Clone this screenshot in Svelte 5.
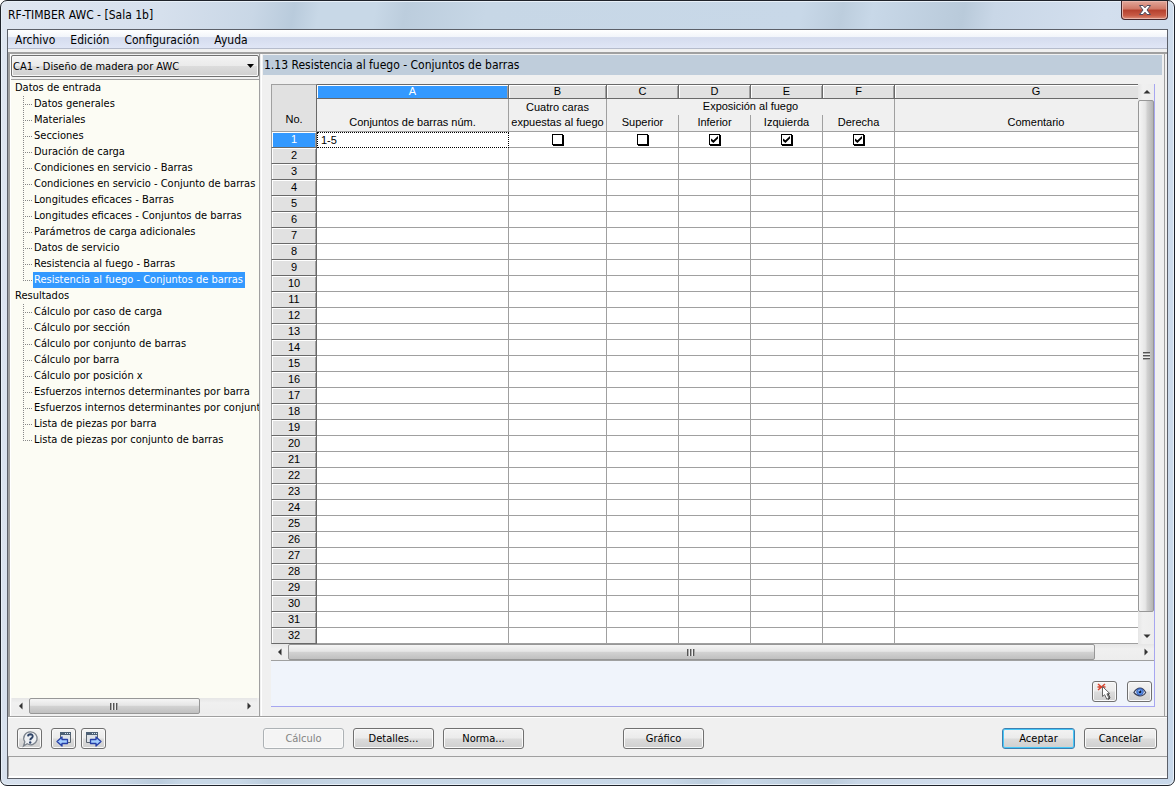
<script>
  const menu = ['Archivo', 'Edición', 'Configuración', 'Ayuda'];
  const groups = [
    {
      title: 'Datos de entrada',
      items: [
        'Datos generales',
        'Materiales',
        'Secciones',
        'Duración de carga',
        'Condiciones en servicio - Barras',
        'Condiciones en servicio - Conjunto de barras',
        'Longitudes eficaces - Barras',
        'Longitudes eficaces - Conjuntos de barras',
        'Parámetros de carga adicionales',
        'Datos de servicio',
        'Resistencia al fuego - Barras',
        'Resistencia al fuego - Conjuntos de barras'
      ]
    },
    {
      title: 'Resultados',
      items: [
        'Cálculo por caso de carga',
        'Cálculo por sección',
        'Cálculo por conjunto de barras',
        'Cálculo por barra',
        'Cálculo por posición x',
        'Esfuerzos internos determinantes por barra',
        'Esfuerzos internos determinantes por conjunto',
        'Lista de piezas por barra',
        'Lista de piezas por conjunto de barras'
      ]
    }
  ];
  let selected = $state('Resistencia al fuego - Conjuntos de barras');
  const letters = ['A', 'B', 'C', 'D', 'E', 'F', 'G'];
  const rows = Array.from({ length: 32 }, (_, i) => i + 1);
  let faces = $state([
    { name: 'Cuatro caras expuestas al fuego', on: false },
    { name: 'Superior', on: false },
    { name: 'Inferior', on: true },
    { name: 'Izquierda', on: true },
    { name: 'Derecha', on: true }
  ]);
</script>

{#snippet arrow(dir)}
  <svg class="arrow {dir}" width="8" height="8" viewBox="0 0 8 8" aria-hidden="true"><path d="M2.5 0.5 6 4 2.5 7.5z" fill="#333" /></svg>
{/snippet}

{#snippet windowArrow(next)}
  <svg width="18" height="16" viewBox="0 0 18 16" aria-hidden="true">
    <path d={next ? 'M1.500 1.500h11v10h-11z' : 'M5.500 1.500h10v10h-10z'} fill="#dfe3e8" stroke="#59636e" />
    <path d={next ? 'M1 1h12v3H1z' : 'M5 1h11v3H5z'} fill="#4d6075" />
    <path d={next ? 'M7 2h1v1H7zM9 2h1v1H9zM11 2h1v1h-1z' : 'M10 2h1v1h-1zM12 2h1v1h-1zM14 2h1v1h-1z'} fill="#d9e6f3" />
    <path
      d={next ? 'M5.500 8.500h5.500V6l5 4.500-5 4.500v-2.500H5.500z' : 'M12.500 8.500H7V6l-5 4.500L7 15v-2.500h5.500z'}
      fill="#a4ceff" stroke="#2740a8" stroke-width="1.300" stroke-linejoin="round" />
  </svg>
{/snippet}

<div class="window">
  <header class="titlebar">
    <h1>RF-TIMBER AWC - [Sala 1b]</h1>
    <button class="close" aria-label="Cerrar">
      <svg width="14" height="12" viewBox="0 0 14 12" aria-hidden="true">
        <path d="M1.500 1.500h3.500l2 2.300 2-2.300h3.500L9 6l3.500 4.500H9L7 8.200 5 10.500H1.500L5 6z" fill="#fff" stroke="#4c4a5c" />
      </svg>
    </button>
  </header>

  <div class="client">
    <nav class="menu">
      {#each menu as m}<button>{m}</button>{/each}
    </nav>

    <main>
      <aside>
        <div class="combo">
          <select aria-label="Caso">
            <option>CA1 - Diseño de madera por AWC</option>
          </select>
          <svg width="7" height="4" viewBox="0 0 7 4" aria-hidden="true"><path d="M0 0h7L3.500 4z" fill="#000" /></svg>
        </div>
        <div class="tree">
          {#each groups as g}
            <h2>{g.title}</h2>
            <ul>
              {#each g.items as item}
                <li><button class:selected={item === selected} onclick={() => (selected = item)}>{item}</button></li>
              {/each}
            </ul>
          {/each}
        </div>
        <div class="hscroll side">
          <button aria-label="Izquierda">{@render arrow('left')}</button>
          <div class="track"><div class="thumb"><i></i></div></div>
          <button aria-label="Derecha">{@render arrow('right')}</button>
        </div>
      </aside>

      <section class="content">
        <h2 class="heading">1.13 Resistencia al fuego - Conjuntos de barras</h2>
        <div class="sheet">
          <div class="grid">
            <div class="viewport">
              <table>
                <colgroup>
                  <col class="c-no" /><col class="c-a" /><col class="c-b" />
                  <col class="c-s" /><col class="c-s" /><col class="c-s" /><col class="c-s" />
                  <col class="c-g" />
                </colgroup>
                <thead>
                  <tr class="letters">
                    <th rowspan="3" class="corner">No.</th>
                    {#each letters as l}<th class:active={l === 'A'}>{l}</th>{/each}
                  </tr>
                  <tr class="names">
                    <th rowspan="2" class="low">Conjuntos de barras núm.</th>
                    <th rowspan="2" class="low">Cuatro caras expuestas al fuego</th>
                    <th colspan="4" class="group">Exposición al fuego</th>
                    <th rowspan="2" class="low">Comentario</th>
                  </tr>
                  <tr class="subnames">
                    <th>Superior</th><th>Inferior</th><th>Izquierda</th><th>Derecha</th>
                  </tr>
                </thead>
                <tbody>
                  {#each rows as n}
                    <tr>
                      <th class:active={n === 1}>{n}</th>
                      {#if n === 1}
                        <td class="focus">1-5</td>
                        {#each faces as f}
                          <td class="tick"><input type="checkbox" aria-label={f.name} bind:checked={f.on} /></td>
                        {/each}
                        <td></td>
                      {:else}
                        {#each letters as _}<td></td>{/each}
                      {/if}
                    </tr>
                  {/each}
                </tbody>
              </table>
            </div>
            <div class="vscroll">
              <button aria-label="Arriba">{@render arrow('up')}</button>
              <div class="track"><div class="thumb"><i></i></div></div>
              <button aria-label="Abajo">{@render arrow('down')}</button>
            </div>
          </div>
          <div class="hscroll wide">
            <button aria-label="Izquierda">{@render arrow('left')}</button>
            <div class="track"><div class="thumb"><i></i></div></div>
            <button aria-label="Derecha">{@render arrow('right')}</button>
          </div>
          <div class="tools">
            <button class="btn icon" aria-label="Seleccionar">
              <svg width="18" height="18" viewBox="0 0 18 18" aria-hidden="true">
                <path d="M2 1l7 6M9 1L2 7M1.500 4h8" stroke="#d8452f" stroke-width="1.500" />
                <path d="M6.500 3.500v10l2.200-1.800 2.100 4.500 2.200-1-2.100-4.300 2.900-.3z" fill="#fff" stroke="#666" />
                <path d="M12 10.500l2 4.500-2 1.500" fill="none" stroke="#333" />
              </svg>
            </button>
            <button class="btn icon" aria-label="Ver">
              <svg width="14" height="12" viewBox="0 0 16 12" aria-hidden="true">
                <path d="M1 6.500Q4 1.500 8 1.500t6.500 5Q12 10.500 8 10.500T1 6.500z" fill="#dfe8f7" stroke="#3a3f55" stroke-width="1.300" />
                <circle cx="8" cy="5.800" r="3.800" fill="#5a90e6" stroke="#2f57b0" />
                <circle cx="8" cy="5.800" r="1.500" fill="#0c1433" />
                <circle cx="7" cy="4.500" r="0.800" fill="#cfe4ff" />
              </svg>
            </button>
          </div>
        </div>
      </section>
    </main>

    <footer>
      <div class="icons">
        <button class="btn icon help" aria-label="Ayuda">
          <svg width="18" height="18" viewBox="0 0 18 18" aria-hidden="true">
            <path d="M9.500 1.800a6.500 6.500 0 1 1-3.300 12L2.500 16l1.300-4.200A6.500 6.500 0 0 1 9.500 1.800z" fill="#eef0f3" stroke="#7c838c" stroke-width="1.300" />
            <path d="M7 6.300Q7.200 4.300 9.400 4.300q2.400.1 2.300 2.100-.1 1.300-1.400 2-1 .6-1 1.900" fill="none" stroke="#2f4468" stroke-width="1.900" />
            <circle cx="9.200" cy="12.500" r="1.200" fill="#2f4468" />
          </svg>
        </button>
        <button class="btn icon" aria-label="Anterior">{@render windowArrow(false)}</button>
        <button class="btn icon" aria-label="Siguiente">{@render windowArrow(true)}</button>
      </div>
      <div class="actions">
        <button class="btn wide-btn" disabled>Cálculo</button>
        <button class="btn wide-btn">Detalles...</button>
        <button class="btn wide-btn">Norma...</button>
        <button class="btn wide-btn graph">Gráfico</button>
        <button class="btn end default">Aceptar</button>
        <button class="btn end">Cancelar</button>
      </div>
    </footer>
    <div class="status"></div>
  </div>
</div>

<style>
  :global(body) { background: #fff; }
  .window, .window :global(*) { box-sizing: border-box; }
  .window {
    min-height: 100vh;
    display: flex;
    flex-direction: column;
    padding: 0 6px;
    border: 1px solid #1f232b;
    border-radius: 7px;
    background: linear-gradient(100deg, #dfe6f1 0, #d6e0ed 160px, #c9d7e6 250px, #b9cbdc 290px, #c8d8e7 315px, #c8d8e7 370px, #bccddd 400px, #c7d7e6 480px, #c8d8e8 790px, #bccddd 830px, #c8d8e8 860px, #b9cada 950px, #c9d7e7 980px, #d3dfee 1090px, #c8d8ea 100%);
    box-shadow: inset 0 0 0 1px #e8f0f8;
    font-family: 'DejaVu Sans Condensed', 'Noto Sans', sans-serif;
    font-size: 11px;
    color: #000;
  }
  h1, h2, ul { margin: 0; padding: 0; font-weight: 400; }
  button, select { font: inherit; color: inherit; margin: 0; padding: 0; border: 0; background: none; }
  svg { display: block; }

  .titlebar { display: flex; justify-content: space-between; align-items: flex-start; height: 28px; padding: 0 0 0 1px; }
  h1 { font-size: 12px; line-height: 28px; }
  .close {
    width: 47px; height: 19px; display: grid; place-items: center;
    border: 1px solid #43262b; border-top: 0; border-radius: 0 0 4px 4px;
    background: linear-gradient(#e2a79a, #cf7766 45%, #b5402d 50%, #c75a45 80%, #dd8f7a);
    box-shadow: inset 0 0 0 1px #e9b5aa;
  }

  .client { flex: 1; display: flex; flex-direction: column; margin-bottom: 6px; border: 1px solid #5c6069; background: #f0f0f0; }
  .menu {
    display: flex; gap: 15px; height: 19px; padding: 0 7px; font-size: 12px; line-height: 20px;
    border-bottom: 1px solid #b6bccc;
    background: linear-gradient(#fff 0, #f2f5fa 38%, #d5dcee 42%, #e0e6f6);
  }

  main { flex: 1; display: flex; margin-top: 3px; border-top: 2px solid #a0a0a0; border-left: 2px solid #a0a0a0; border-bottom: 1px solid #a0a0a0; min-width: 0; }
  aside { flex: none; width: 250px; display: flex; flex-direction: column; border-right: 1px solid #a0a0a0; border-left: 1px solid #fff; padding-top: 1px; }
  .combo { display: grid; align-items: center; height: 22px; border: 1px solid #707070; border-radius: 2px; background: linear-gradient(#f3f3f3, #ebebeb 48%, #dcdcdc 52%, #cfcfcf); box-shadow: inset 0 0 0 1px #f8f8f8; }
  .combo select, .combo svg { grid-area: 1 / 1; }
  .combo select { appearance: none; width: 100%; padding-left: 1px; height: 20px; }
  .combo svg { justify-self: end; margin-right: 4px; pointer-events: none; }
  .tree { flex: 1; margin-top: 2px; border-top: 1px solid #a0a0a0; background: #fcfcf4; overflow: hidden; white-space: nowrap; }
  .tree h2 { font-size: 11px; line-height: 16px; padding-left: 4px; }
  .tree ul { list-style: none; padding-left: 12px; }
  .tree li {
    height: 16px; padding-left: 10px; display: flex;
    --dots-v: repeating-linear-gradient(#888 0 1px, transparent 1px 2px);
    --dots-h: repeating-linear-gradient(90deg, #888 0 1px, transparent 1px 2px);
    background: var(--dots-v) 0 0 / 1px 100% no-repeat, var(--dots-h) 0 8px / 9px 1px no-repeat;
  }
  .tree li:last-child { background: var(--dots-v) 0 0 / 1px 9px no-repeat, var(--dots-h) 0 8px / 9px 1px no-repeat; }
  .tree li button { height: 16px; line-height: 16px; padding: 0 2px 0 1px; }
  .tree li .selected { background: #3399ff; color: #fff; }

  .arrow.left { transform: rotate(180deg); }
  .arrow.up { transform: rotate(-90deg); }
  .arrow.down { transform: rotate(90deg); }
  .hscroll { display: flex; height: 16px; background: linear-gradient(#e6e6e6, #f0f0f0 30%, #ededed); }
  .hscroll > button, .vscroll > button { flex: none; display: grid; place-items: center; width: 17px; height: 16px; }
  .track { flex: 1; display: flex; }
  .thumb { display: grid; place-items: center; border: 1px solid #979797; border-radius: 2px; }
  .hscroll .thumb { background: linear-gradient(#f5f5f5, #e6e6e6 45%, #d2d2d2 52%, #c0c0c0); }
  .hscroll .thumb i { width: 8px; height: 7px; background: repeating-linear-gradient(90deg, #555 0 1px, #aaa 1px 2px, #eee 2px 3px); }
  .side { margin: 0 2px 2px 1px; }
  .side .thumb { width: 81%; }
  .wide { border-bottom: 1px solid #a0a0a0; height: 17px; }
  .wide .thumb { width: 95%; }
  .vscroll { flex: none; width: 16px; display: flex; flex-direction: column; background: linear-gradient(90deg, #e6e6e6, #f0f0f0 30%, #ededed); }
  .vscroll .track { flex-direction: column; }
  .vscroll .thumb { width: 16px; height: 97%; background: linear-gradient(90deg, #f5f5f5, #e6e6e6 45%, #d0d0d0 60%, #b4b4b4); }
  .vscroll .thumb i { width: 7px; height: 8px; background: repeating-linear-gradient(#555 0 1px, #aaa 1px 2px, #eee 2px 3px); }

  .content { flex: 1; min-width: 0; display: flex; flex-direction: column; margin-left: 1px; margin-right: 2px; padding: 1px 2px 9px 1px; border-left: 1px solid #fff; border-right: 1px solid #a0a0a0; }
  .heading { height: 20px; font-size: 12px; line-height: 20px; padding-left: 1px; background: #bfcddb; }
  .sheet { flex: 1; display: flex; flex-direction: column; margin: 9px 7px 0 8px; border-right: 1px solid #a6a6f0; border-bottom: 1px solid #a6a6f0; background: #f0f4fb; min-width: 0; }
  .grid { display: flex; }
  .viewport { flex: 1; min-width: 0; overflow: hidden; background: #fff; }

  table { table-layout: fixed; width: 907px; border-collapse: separate; border-spacing: 0; font-family: 'Liberation Sans', Arial, sans-serif; font-size: 11px; line-height: 14px; }
  .c-no { width: 46px; } .c-a { width: 192px; } .c-b { width: 98px; } .c-s { width: 72px; } .c-g { width: 283px; }
  th, td { padding: 0; font-weight: 400; border-right: 1px solid #a0a0a0; border-bottom: 1px solid #a0a0a0; overflow: hidden; }
  thead th { background: #f0f0f0; }
  .letters { height: 15px; }
  .letters th { height: 15px; line-height: 13px; background: #e1e1e1; border-top: 1px solid #696969; border-right-color: #696969; border-bottom-color: #696969; box-shadow: inset 1px 1px #fff, inset -1px 0 #a0a0a0; }
  .letters .corner { border-left: 1px solid #a0a0a0; border-top-color: #a0a0a0; border-bottom-color: #a0a0a0; vertical-align: bottom; line-height: 24px; box-shadow: none; }
  .letters .active { background: #3399ff; color: #fff; }
  .names { height: 16px; }
  .subnames { height: 17px; }
  .names .low, .subnames th { vertical-align: bottom; line-height: 16px; padding-bottom: 1px; }
  .names .low { line-height: 15px; padding: 0 2px 1px; }
  .subnames th { line-height: 15px; }
  .names .group { border-bottom: 0; line-height: 14px; padding-bottom: 2px; }
  tbody tr { height: 16px; }
  tbody td, tbody th { height: 16px; line-height: 15px; }
  tbody th { background: #e1e1e1; border-left: 1px solid #a0a0a0; border-right-color: #696969; border-bottom-color: #696969; box-shadow: inset 1px 1px #fff, inset -1px 0 #a0a0a0; }
  tbody th.active { background: #3399ff; color: #fff; }
  td { background: #fff; }
  .focus { padding-left: 3px; line-height: 13px; border: 1px dotted #000; }
  .tick input {
    appearance: none; display: grid; place-items: center; width: 11px; height: 11px; margin: 0 auto;
    border: 1px solid #000; background: #fff; box-shadow: 1px 1px #000;
  }
  .tick input:checked::before { content: ''; width: 7px; height: 7px; background: #000; clip-path: polygon(0 35%, 35% 60%, 100% 0, 100% 35%, 35% 100%, 0 70%); }

  .tools { flex: 1; display: flex; justify-content: flex-end; align-items: flex-end; gap: 10px; padding: 18px 2px 4px; }
  .btn {
    display: grid; place-items: center; height: 21px; border: 1px solid #707070; border-radius: 3px;
    background: linear-gradient(#f3f3f3, #ebebeb 48%, #dcdcdc 52%, #cfcfcf); box-shadow: inset 0 0 0 1px #fafafa;
  }
  .icon { width: 25px; }
  .wide-btn { width: 81px; }
  .end { width: 73px; }
  .btn:disabled { color: #838383; border-color: #adb2b5; background: #f4f4f4; }
  .default { border-color: #3c7fb1; box-shadow: inset 0 0 0 1px #48c8f8; margin-left: auto; }

  footer { display: flex; align-items: center; height: 40px; padding: 3px 10px 0 9px; border-top: 1px solid #fff; border-bottom: 1px solid #a0a0a0; }
  .icons { display: flex; gap: 5px; width: 246px; flex: none; }
  .help { margin-right: 4px; }
  .actions { flex: 1; display: flex; gap: 9px; }
  .graph { margin-left: 90px; }
  .status { height: 21px; border-left: 1px solid #a0a0a0; border-bottom: 2px solid #fff; }
</style>
